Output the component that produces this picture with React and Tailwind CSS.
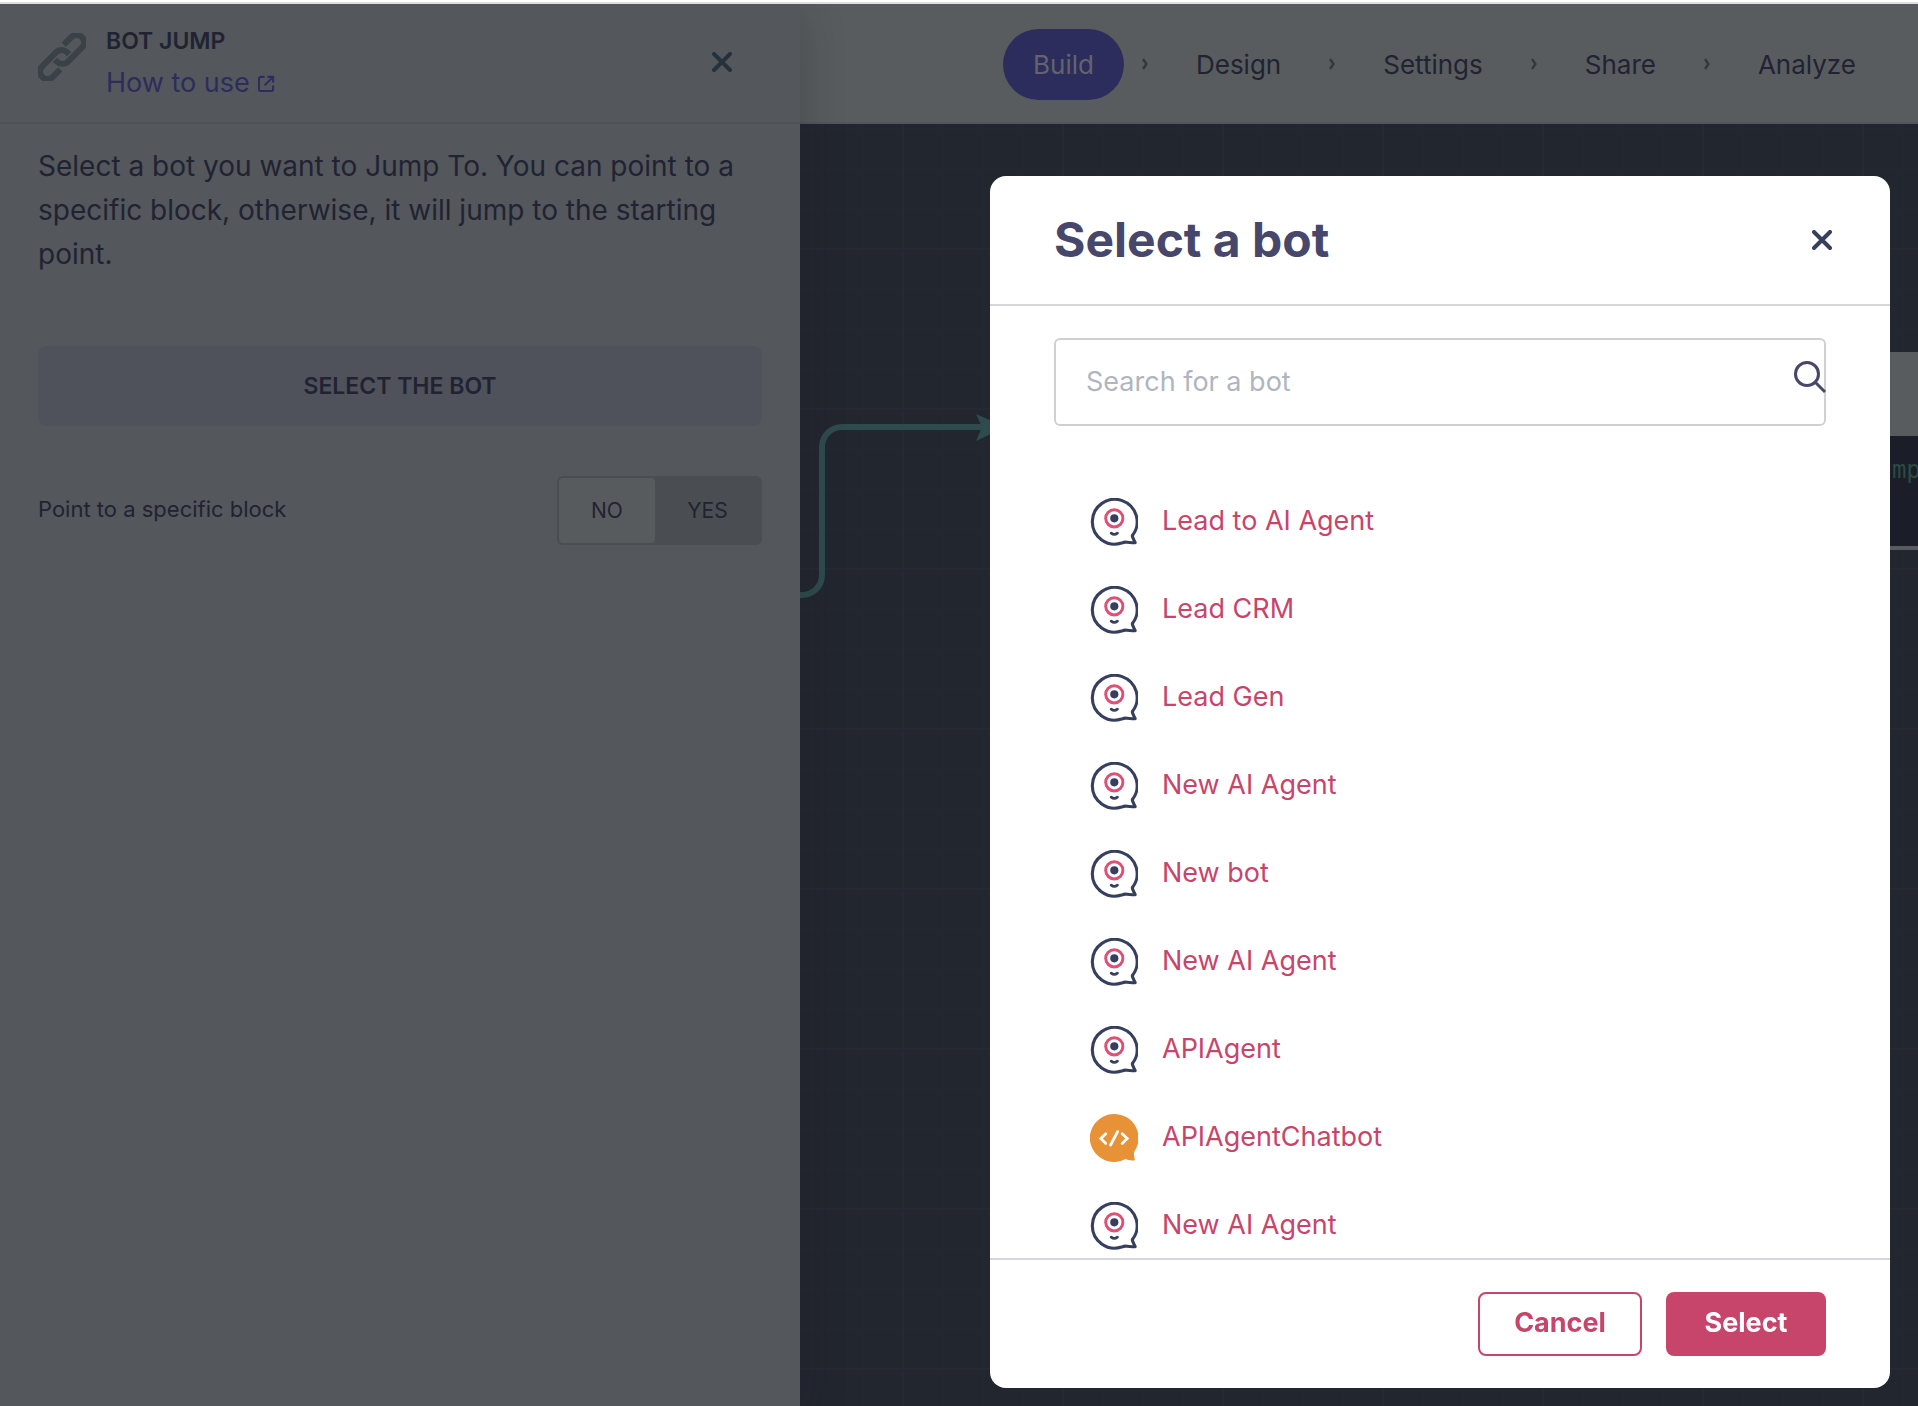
import React, { useState } from "react";

const steps = ["Build", "Design", "Settings", "Share", "Analyze"];

const bots = [
  { id: 1, name: "Lead to AI Agent", type: "bot" },
  { id: 2, name: "Lead CRM", type: "bot" },
  { id: 3, name: "Lead Gen", type: "bot" },
  { id: 4, name: "New AI Agent", type: "bot" },
  { id: 5, name: "New bot", type: "bot" },
  { id: 6, name: "New AI Agent", type: "bot" },
  { id: 7, name: "APIAgent", type: "bot" },
  { id: 8, name: "APIAgentChatbot", type: "api" },
  { id: 9, name: "New AI Agent", type: "bot" },
];

export default function App() {
  return (
    <div className="min-h-screen flex flex-col bg-[#22262f] font-[Inter,sans-serif]">
      <div className="h-1 bg-white border-b-2 border-[#dfe0db]" />
      <div className="flex-1 flex overflow-hidden">
        <JumpPanel />
        <main className="flex-1 min-w-0 flex flex-col">
          <TopNav />
          <Canvas />
        </main>
      </div>
      <SelectBotModal />
    </div>
  );
}

function JumpPanel() {
  return (
    <aside className="relative z-10 w-[800px] shrink-0 bg-[#54575c] text-[#212332] shadow-[0_10px_40px_rgba(27,29,41,0.25)]">
      <div className="h-[120px] flex items-start border-b-2 border-[#4d5056] pl-[38px] pr-16 pt-4">
        <ChainIcon />
        <div className="ml-5 flex-1">
          <h2 className="text-[23px] leading-[42px] font-semibold">BOT JUMP</h2>
          <a href="#help" className="flex items-center gap-2 text-[27px] leading-[42px] text-[#2c2d5d]">
            How to use
            <ExternalIcon />
          </a>
        </div>
        <button type="button" aria-label="Close panel" className="mt-7 p-1 text-[#26323b]">
          <CloseIcon />
        </button>
      </div>

      <div className="px-[38px] pt-5">
        <p className="text-[28px] leading-[44px]">
          Select a bot you want to Jump To. You can point to a specific block, otherwise, it will jump to the
          starting point.
        </p>
        <button
          type="button"
          className="mt-[70px] w-full h-20 rounded-lg bg-[#4f525b] text-[23px] font-semibold"
        >
          SELECT THE BOT
        </button>
        <div className="mt-[50px] flex items-center justify-between">
          <span id="point-label" className="pb-0.5 text-[22px]">
            Point to a specific block
          </span>
          <div
            role="group"
            aria-labelledby="point-label"
            className="h-[69px] flex rounded-md border-2 border-[#4a4d52] bg-[#4a4d52] text-[21px]"
          >
            <button type="button" className="w-24 rounded bg-[#575b5d]">
              NO
            </button>
            <button type="button" className="w-[105px]">
              YES
            </button>
          </div>
        </div>
      </div>
    </aside>
  );
}

function TopNav() {
  return (
    <nav className="h-[120px] flex items-center justify-end border-b-2 border-[#53565b] bg-[#585c5e] pt-0.5 pr-8 text-[26px] text-[#212332]">
      {steps.map((step, i) => (
        <React.Fragment key={step}>
          {i > 0 && (
            <span className="w-[42px] flex justify-center text-[#33383d]">
              <svg width="6" height="12" viewBox="0 0 6 12" fill="none" stroke="currentColor" strokeWidth="2.4">
                <path d="M1 1l3.4 5L1 11" />
              </svg>
            </span>
          )}
          <a
            href={`#${step.toLowerCase()}`}
            className={
              i === 0
                ? "h-[71px] flex items-center rounded-full bg-[#2c2d5d] px-[30px] text-[#62646d]"
                : "h-[71px] flex items-center px-[30px]"
            }
          >
            {step}
          </a>
        </React.Fragment>
      ))}
    </nav>
  );
}

function Canvas() {
  return (
    <div className="relative flex-1 overflow-hidden bg-[linear-gradient(#262933_2px,transparent_2px),linear-gradient(90deg,#262933_2px,transparent_2px),linear-gradient(#23272f_2px,transparent_2px),linear-gradient(90deg,#23272f_2px,transparent_2px)] bg-[size:160px_160px,160px_160px,40px_40px,40px_40px] bg-[position:102px_124px]">
      <svg
        width="240"
        height="200"
        viewBox="0 0 240 200"
        fill="none"
        className="absolute left-0 top-[280px]"
      >
        <path
          d="M-10 191H2A20 20 0 0 0 22 171V43A20 20 0 0 1 42 23H185"
          stroke="#2f4b4d"
          strokeWidth="6"
        />
        <path d="M176 10L206 23L176 37L182 23Z" fill="#2f4b4d" />
      </svg>
      {/* block under the dialog */}
      <div className="absolute left-[1000px] top-[228px] w-[300px] border-b-4 border-[#585c5e] bg-[#1b1d29]">
        <div className="h-[84px] bg-[#585c5e]" />
        <p className="h-[110px] pl-[63px] pt-4 font-['DejaVu_Sans_Mono',monospace] text-2xl leading-9 text-[#2b4b43]">
          Jump
        </p>
      </div>
    </div>
  );
}

function SelectBotModal() {
  const [search, setSearch] = useState("");
  const visible = bots.filter((bot) => bot.name.toLowerCase().includes(search.toLowerCase()));

  return (
    <div className="fixed inset-0 z-20 flex justify-end pt-44 pr-7 pb-[18px]">
      <div role="dialog" aria-labelledby="dialog-title" className="w-[900px] flex flex-col rounded-2xl bg-white">
        <div className="h-[130px] shrink-0 flex items-center justify-between border-b-2 border-[#d5d5dc] pl-16 pr-[54px]">
          <h1 id="dialog-title" className="text-[48px] leading-[60px] font-bold text-[#46476b]">
            Select a bot
          </h1>
          <button type="button" aria-label="Close" className="p-1 text-[#36405e]">
            <CloseIcon />
          </button>
        </div>

        <div className="flex-1 min-h-0 overflow-hidden px-16 pt-8">
          <div className="relative">
            <input
              type="text"
              aria-label="Search for a bot"
              placeholder="Search for a bot"
              value={search}
              onChange={(e) => setSearch(e.target.value)}
              className="w-full h-[88px] rounded-md border-2 border-[#d0d0d0] px-[30px] pb-0.5 text-[27px] text-[#46476b] placeholder:text-[#b0b5bf] outline-none"
            />
            <SearchIcon />
          </div>
          <ul className="mt-[52px] pl-9">
            {visible.map((bot) => (
              <li key={bot.id} className="h-[88px] flex items-center">
                <button type="button" className="flex items-center gap-6 text-[27px] text-[#c7456a]">
                  {bot.type === "api" ? <ApiIcon /> : <BotIcon />}
                  <span className="pb-0.5">{bot.name}</span>
                </button>
              </li>
            ))}
          </ul>
        </div>

        <div className="h-[130px] shrink-0 flex items-center justify-end gap-6 border-t-2 border-[#d5d5dc] px-16 text-[27px] font-bold">
          <button type="button" className="w-[164px] h-16 rounded-lg border-2 border-[#c7456a] pb-0.5 text-[#c7456a]">
            Cancel
          </button>
          <button type="button" className="w-40 h-16 rounded-lg bg-[#c7456a] pb-0.5 text-white">
            Select
          </button>
        </div>
      </div>
    </div>
  );
}

function CloseIcon() {
  return (
    <svg width="20" height="20" viewBox="0 0 20 20" fill="none" stroke="currentColor" strokeWidth="4" strokeLinecap="round">
      <path d="M2 2l16 16M18 2L2 18" />
    </svg>
  );
}

function SearchIcon() {
  return (
    <svg
      width="34"
      height="34"
      viewBox="0 0 34 34"
      fill="none"
      stroke="#46476b"
      strokeWidth="3"
      className="absolute right-[-1px] top-[22px]"
    >
      <circle cx="14" cy="14" r="11.5" />
      <path d="M22 22l10 10" />
    </svg>
  );
}

function ExternalIcon() {
  return (
    <svg width="17" height="17" viewBox="0 0 18 18" fill="none" stroke="currentColor" strokeWidth="2.2">
      <path d="M7 2H3a2 2 0 0 0-2 2v11a2 2 0 0 0 2 2h11a2 2 0 0 0 2-2v-4" />
      <path d="M7 11l9-9M10 2h6v6" />
    </svg>
  );
}

function ChainIcon() {
  return (
    <svg width="48" height="48" viewBox="0 0 48 48" fill="none" className="mt-[13px]">
      <g transform="rotate(-45 24 24)" stroke="#3a4247" strokeWidth="6">
        <path d="M14 31.5H3.4A7.5 7.5 0 0 1 3.4 16.5H23.4A7.5 7.5 0 0 1 30.9 24V27" />
        <path d="M34 16.5H44.6A7.5 7.5 0 0 1 44.6 31.5H24.6A7.5 7.5 0 0 1 17.1 24V21" />
      </g>
    </svg>
  );
}

function BotIcon() {
  return (
    <svg width="48" height="48" viewBox="0 0 48 48" fill="none">
      <path
        d="M42.4 37.5A22.4 22.4 0 1 0 31.5 45.1C33.5 44.3 35 43.9 37 44.3C39.8 44.8 42.5 44.9 45.2 44.6C44 42.3 43.2 40.8 42.6 39C42.4 38.4 42.3 38 42.4 37.5Z"
        stroke="#36405e"
        strokeWidth="3.1"
        strokeLinejoin="round"
      />
      <circle cx="24.3" cy="20.3" r="8.6" stroke="#dd5078" strokeWidth="3" />
      <circle cx="24.3" cy="20.3" r="4.1" fill="#36405e" />
      <path d="M21.2 35.2q3.1 2.4 6.2 0" stroke="#36405e" strokeWidth="2.8" strokeLinecap="round" />
    </svg>
  );
}

function ApiIcon() {
  return (
    <svg width="48" height="48" viewBox="0 0 48 48" fill="none">
      <path
        d="M24 0A24 24 0 1 0 35.5 45C38 46.2 41.5 46.8 45 46.2C44.3 43.8 43.7 41 44.2 37.8A24 24 0 0 0 24 0Z"
        fill="#e79237"
      />
      <path
        d="M15.8 19.8L10.8 24.6L15.8 29.4M32.2 19.8L37.2 24.6L32.2 29.4M27.6 17.6L20.6 31"
        stroke="#fff"
        strokeWidth="2.8"
        strokeLinecap="round"
      />
    </svg>
  );
}
